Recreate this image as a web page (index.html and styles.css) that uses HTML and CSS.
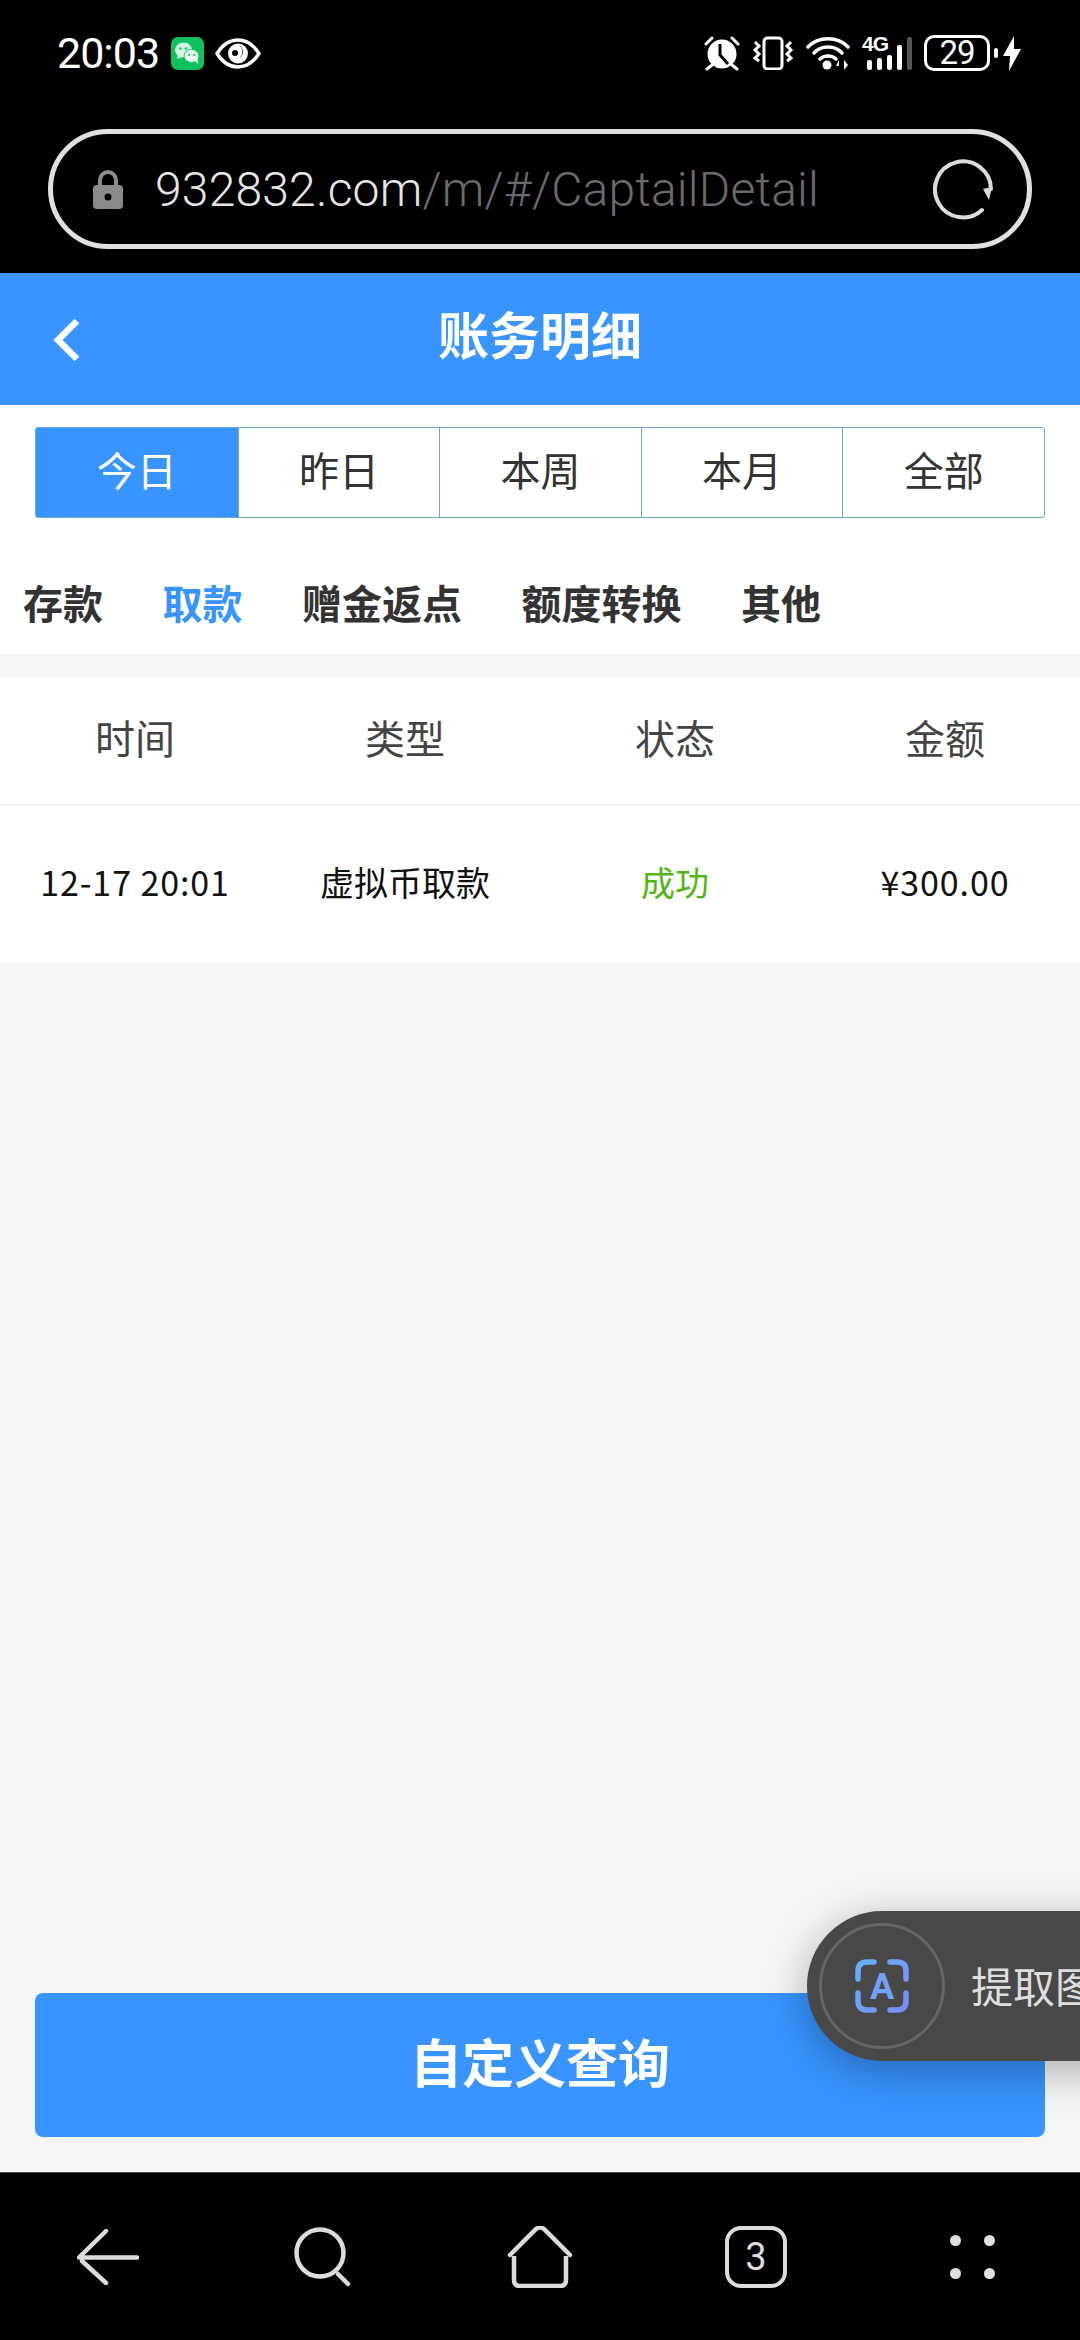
FILE: index.html
```html
<!DOCTYPE html>
<html lang="zh-CN">
<head>
    <meta charset="UTF-8">
    <meta name="viewport" content="width=device-width, initial-scale=1.0">
    <title>账务明细</title>
    <link rel="stylesheet" href="styles.css">
</head>
<body>
    <div class="phone">
        <!-- 状态栏 -->
        <div class="status-bar">
            <div class="status-left">
                <span class="clock">20:03</span>
                <svg class="wechat" width="33" height="33" viewBox="0 0 33 33">
                    <rect width="33" height="33" rx="7" fill="#0fc15f"/>
                    <ellipse cx="12.5" cy="13" rx="8.5" ry="7.5" fill="#d6f5e2"/>
                    <path d="M7 18l-1 4 5-2z" fill="#d6f5e2"/>
                    <ellipse cx="20.5" cy="19" rx="7.5" ry="6.5" fill="#eefbf3" stroke="#0fc15f" stroke-width="1"/>
                    <path d="M24 24l3 3-.5-5z" fill="#eefbf3"/>
                    <circle cx="9.5" cy="11.5" r="1.3" fill="#0fc15f"/>
                    <circle cx="15" cy="11.5" r="1.3" fill="#0fc15f"/>
                    <circle cx="18" cy="18" r="1.1" fill="#0fc15f"/>
                    <circle cx="23" cy="18" r="1.1" fill="#0fc15f"/>
                </svg>
                <svg class="eye" width="46" height="31" viewBox="0 0 46 31">
                    <path d="M2 15.5C8 6 15 2 23 2s15 4 21 13.500C38 25 31 29 23 29S8 25 2 15.500z" fill="none" stroke="#fff" stroke-width="3.500" stroke-linejoin="round"/>
                    <circle cx="23" cy="15.500" r="10" fill="#fff"/>
                    <path d="M24 7a8 8 0 0 1 1 13 9 9 0 0 0-1-13z" fill="#000"/>
                    <circle cx="20" cy="15" r="3" fill="#000"/>
                </svg>
            </div>
            <div class="status-right">
                <svg width="36" height="35" viewBox="0 0 36 35">
                    <circle cx="18" cy="18" r="14.500" fill="#fff"/>
                    <path d="M16 8v11l8 9" fill="none" stroke="#000" stroke-width="3"/>
                    <path d="M2 8l6-6M34 8l-6-6M3 33l5-4M33 33l-5-4" stroke="#fff" stroke-width="3" stroke-linecap="round"/>
                </svg>
                <svg width="42" height="34" viewBox="0 0 42 34">
                    <rect x="12" y="2" width="18" height="31" rx="3.500" fill="none" stroke="#fff" stroke-width="3"/>
                    <path d="M3 6l4 4-4 4 4 4-4 4 4 3M39 6l-4 4 4 4-4 4 4 4-4 3" fill="none" stroke="#fff" stroke-width="3"/>
                </svg>
                <svg width="44" height="34" viewBox="0 0 44 34">
                    <path d="M2 11C12 0 32 0 42 11" fill="none" stroke="#fff" stroke-width="3.500" stroke-linecap="round"/>
                    <path d="M8 17c7-8 21-8 28 0" fill="none" stroke="#fff" stroke-width="3.500" stroke-linecap="round"/>
                    <path d="M14 23c4-4 12-4 16 0" fill="none" stroke="#fff" stroke-width="3.500" stroke-linecap="round"/>
                    <circle cx="21" cy="29" r="4.500" fill="#fff"/>
                    <path d="M33 24l-3 6h3zM34.500 24v10M38 24v10l4-5z" fill="#fff"/>
                </svg>
                <div class="signal">
                    <span class="net">4G</span>
                    <i class="bar b1"></i>
                    <i class="bar b2"></i>
                    <i class="bar b3"></i>
                    <i class="bar b4"></i>
                    <i class="bar b5"></i>
                </div>
                <div class="battery"><span>29</span></div>
                <svg width="18" height="35" viewBox="0 0 18 35">
                    <path d="M11 0L0 20h7l-1 15L18 13h-7z" fill="#fff"/>
                </svg>
            </div>
        </div>

        <!-- 地址栏 -->
        <div class="url-wrap">
            <div class="url-bar">
                <svg class="lock" width="30" height="40" viewBox="0 0 30 40">
                    <path d="M7 18v-7a8 8 0 0 1 16 0v7" fill="none" stroke="#8a8a8a" stroke-width="4"/>
                    <rect y="16" width="30" height="24" rx="4" fill="#8a8a8a"/>
                    <circle cx="15" cy="28" r="3.500" fill="#000"/>
                </svg>
                <span class="url"><b>932832.com</b>/m/#/CaptailDetail</span>
                <svg class="reload" width="62" height="62" viewBox="0 0 62 62">
                    <path d="M50 52A28 28 0 1 1 59 31" fill="none" stroke="#dcdcdc" stroke-width="4" stroke-linecap="round"/>
                    <path d="M51 31l9-2-3 13z" fill="#dcdcdc"/>
                </svg>
            </div>
        </div>

        <div class="header">
            <svg class="back" width="28" height="44" viewBox="0 0 28 44">
                <path d="M25 3L6 22l19 19" fill="none" stroke="#fff" stroke-width="6.500"/>
            </svg>
            <h1>账务明细</h1>
        </div>

        <div class="filter-panel">
            <div class="date-tabs">
                <div class="date-tab active">今日</div>
                <div class="date-tab">昨日</div>
                <div class="date-tab">本周</div>
                <div class="date-tab">本月</div>
                <div class="date-tab">全部</div>
            </div>
            <div class="type-tabs">
                <span>存款</span>
                <span class="active">取款</span>
                <span>赠金返点</span>
                <span>额度转换</span>
                <span>其他</span>
            </div>
        </div>

        <!-- 明细表 -->
        <div class="record-table">
            <div class="row head">
                <div>时间</div>
                <div>类型</div>
                <div>状态</div>
                <div>金额</div>
            </div>
            <div class="row item">
                <div class="num">12-17 20:01</div>
                <div>虚拟币取款</div>
                <div class="ok">成功</div>
                <div class="num">¥300.00</div>
            </div>
        </div>

        <div class="query-btn">自定义查询</div>

        <!-- 底部导航 -->
        <div class="nav-bar">
            <svg width="62" height="56" viewBox="0 0 62 56">
                <path d="M29 2L2 28.500h58M5 32l24 22" fill="none" stroke="#dcdcdc" stroke-width="4.500" stroke-linecap="round" stroke-linejoin="round"/>
            </svg>
            <svg width="60" height="60" viewBox="0 0 60 60">
                <circle cx="26" cy="26" r="23.500" fill="none" stroke="#dcdcdc" stroke-width="4.500"/>
                <path d="M44 47l10 10" stroke="#dcdcdc" stroke-width="4.500" stroke-linecap="round"/>
            </svg>
            <svg width="66" height="62" viewBox="0 0 66 62">
                <path d="M3 29L29 3q4-3 8 0l26 26" fill="none" stroke="#dcdcdc" stroke-width="4.500" stroke-linecap="round"/>
                <path d="M7 30v24q0 6 6 6h40q6 0 6-6V30" fill="none" stroke="#dcdcdc" stroke-width="4.500"/>
            </svg>
            <div class="tab-count">3</div>
            <div class="dots"><i></i><i></i><i></i><i></i></div>
        </div>

        <!-- 浮动按钮 -->
        <div class="float-pill">
            <div class="float-circle">
                <svg width="54" height="54" viewBox="0 0 54 54">
                    <defs>
                        <linearGradient id="scanBlue" x1="0" y1="0" x2="1" y2="1">
                            <stop offset="0" stop-color="#66b0f8"/>
                            <stop offset="1" stop-color="#7c8cf6"/>
                        </linearGradient>
                    </defs>
                    <path d="M3 20v-8q0-9 9-9h7M35 3h7q9 0 9 9v8M51 34v8q0 9-9 9h-7M19 51h-7q-9 0-9-9v-8" fill="none" stroke="url(#scanBlue)" stroke-width="5.500" stroke-linecap="round"/>
                    <text x="27" y="40" class="scan-letter">A</text>
                </svg>
            </div>
            <span class="float-text">提取图片文字</span>
        </div>
    </div>
</body>
</html>
```

FILE: styles.css
```css
* {
    box-sizing: border-box;
}

body {
    margin: 0;
    padding: 0;
    background-color: #000;
    font-family: "Noto Sans CJK SC", Roboto, sans-serif;
}

.phone {
    position: relative;
    width: 1080px;
    height: 2340px;
    overflow: hidden;
    display: flex;
    flex-direction: column;
    background-color: #f4f6f8;
}

/* 状态栏 */
.status-bar {
    height: 106px;
    padding: 0 59px 0 57px;
    background-color: #000;
    display: flex;
    justify-content: space-between;
    align-items: center;
}

.status-left {
    display: flex;
    align-items: center;
}

.clock {
    width: 114px;
    font-family: Roboto, sans-serif;
    font-weight: 400;
    font-size: 43px;
    letter-spacing: -1px;
    color: #fff;
}

.eye {
    margin-left: 11px;
}

.status-right {
    display: flex;
    align-items: center;
    gap: 12px;
}

.signal {
    position: relative;
    width: 50px;
    height: 34px;
    padding-left: 5px;
    display: flex;
    align-items: flex-end;
    gap: 4.500px;
}

.net {
    position: absolute;
    top: -4px;
    left: 0;
    font-family: "Liberation Sans", sans-serif;
    font-size: 21px;
    font-weight: 700;
    letter-spacing: -1px;
    color: #fff;
}

.bar {
    width: 5.500px;
    background-color: #fff;
    border-radius: 2px;
}

.b1 {
    height: 10px;
}

.b2 {
    height: 12px;
}

.b3 {
    height: 15px;
}

.b4 {
    height: 25px;
}

.b5 {
    height: 33px;
    background-color: #555;
}

.battery {
    position: relative;
    width: 66px;
    height: 36px;
    border: 3px solid #fff;
    border-radius: 10px;
    display: flex;
    justify-content: center;
    align-items: center;
    margin-right: 1px;
}

.battery::after {
    content: "";
    position: absolute;
    top: 10px;
    right: -11px;
    width: 4px;
    height: 10px;
    background-color: #fff;
    border-radius: 2px;
}

.battery span {
    font-family: Roboto, sans-serif;
    font-weight: 400;
    font-size: 33px;
    line-height: 30px;
    letter-spacing: -1px;
    color: #fff;
}

/* 地址栏 */
.url-wrap {
    height: 167px;
    padding: 23px 48px 0;
    background-color: #000;
}

.url-bar {
    height: 120px;
    border: 5px solid #e0e0e0;
    border-radius: 60px;
    display: flex;
    align-items: center;
    padding-left: 40px;
    position: relative;
}

.url {
    margin-left: 32px;
    font-family: Roboto, sans-serif;
    font-weight: 300;
    font-size: 48px;
    letter-spacing: 0.200px;
    color: #6a6a6a;
    white-space: nowrap;
}

.url b {
    font-weight: 300;
    color: #e6e6e6;
}

.reload {
    position: absolute;
    right: 33px;
    top: 24px;
}

/* 标题 */
.header {
    position: relative;
    height: 132px;
    background-color: #3894ff;
    display: flex;
    justify-content: center;
    align-items: center;
}

.header h1 {
    margin: 0 0 12px;
    font-size: 51px;
    font-weight: 700;
    color: #fff;
}

.back {
    position: absolute;
    left: 52px;
    top: 45px;
}

.filter-panel {
    height: 249px;
    padding: 22px 35px 0;
    background-color: #fff;
}

.date-tabs {
    display: grid;
    grid-template-columns: repeat(5, 1fr);
    height: 91px;
    border: 1.500px solid #6ea6dc;
    border-radius: 3px;
}

.date-tab {
    display: flex;
    justify-content: center;
    align-items: center;
    padding-bottom: 8px;
    font-size: 40px;
    color: #333;
    border-left: 1.500px solid #6ea6dc;
}

.date-tab:first-child {
    border-left: none;
}

.date-tab.active {
    background-color: #3894ff;
    color: #fff;
}

.type-tabs {
    display: flex;
    gap: 59.500px;
    margin: 55px 0 0 -12px;
    font-size: 40px;
    line-height: 58px;
    font-weight: 700;
    color: #333;
}

.type-tabs .active {
    color: #3894ff;
}

/* 明细表 */
.record-table {
    margin-top: 23px;
    background-color: #fff;
}

.row {
    display: grid;
    grid-template-columns: repeat(4, 1fr);
    align-items: center;
    text-align: center;
}

.head {
    height: 129px;
    padding-bottom: 8px;
    font-size: 40px;
    color: #444;
    border-bottom: 2px solid #f0f0f0;
}

.item {
    height: 157px;
    padding-bottom: 6px;
    font-size: 34px;
    color: #111;
}

.num {
    letter-spacing: 0.900px;
}

.ok {
    color: #52b415;
}

.query-btn {
    margin: auto 35px 35px;
    height: 144px;
    padding-bottom: 9px;
    background-color: #3894ff;
    border-radius: 8px;
    display: flex;
    justify-content: center;
    align-items: center;
    font-size: 52px;
    font-weight: 700;
    color: #fff;
}

/* 底部导航 */
.nav-bar {
    height: 168px;
    background-color: #000;
    border-top: 1px solid #444;
    display: grid;
    grid-template-columns: repeat(5, 1fr);
    justify-items: center;
    align-items: center;
}

.tab-count {
    width: 62px;
    height: 62px;
    border: 4.500px solid #dcdcdc;
    border-radius: 16px;
    display: flex;
    justify-content: center;
    align-items: center;
    font-family: Roboto, sans-serif;
    font-size: 38px;
    font-weight: 400;
    color: #dcdcdc;
}

.dots {
    width: 45px;
    display: grid;
    grid-template-columns: 11px 11px;
    justify-content: space-between;
    row-gap: 22px;
}

.dots i {
    width: 11px;
    height: 11px;
    border-radius: 50%;
    background-color: #e0e0e0;
}

/* 浮动按钮 */
.float-pill {
    position: absolute;
    left: 807px;
    top: 1911px;
    width: 400px;
    height: 150px;
    padding-left: 12px;
    border-radius: 75px;
    background-color: #484848;
    box-shadow: 0 10px 44px rgba(0, 0, 0, 0.3);
    display: flex;
    align-items: center;
}

.float-circle {
    width: 126px;
    height: 126px;
    flex-shrink: 0;
    border: 3px solid #666;
    border-radius: 50%;
    display: flex;
    justify-content: center;
    align-items: center;
}

.scan-letter {
    font-family: Roboto, sans-serif;
    font-size: 36px;
    font-weight: 700;
    text-anchor: middle;
    fill: #76a0f6;
}

.float-text {
    margin-left: 26px;
    padding-bottom: 4px;
    font-size: 42px;
    color: #dedede;
    white-space: nowrap;
}
```
